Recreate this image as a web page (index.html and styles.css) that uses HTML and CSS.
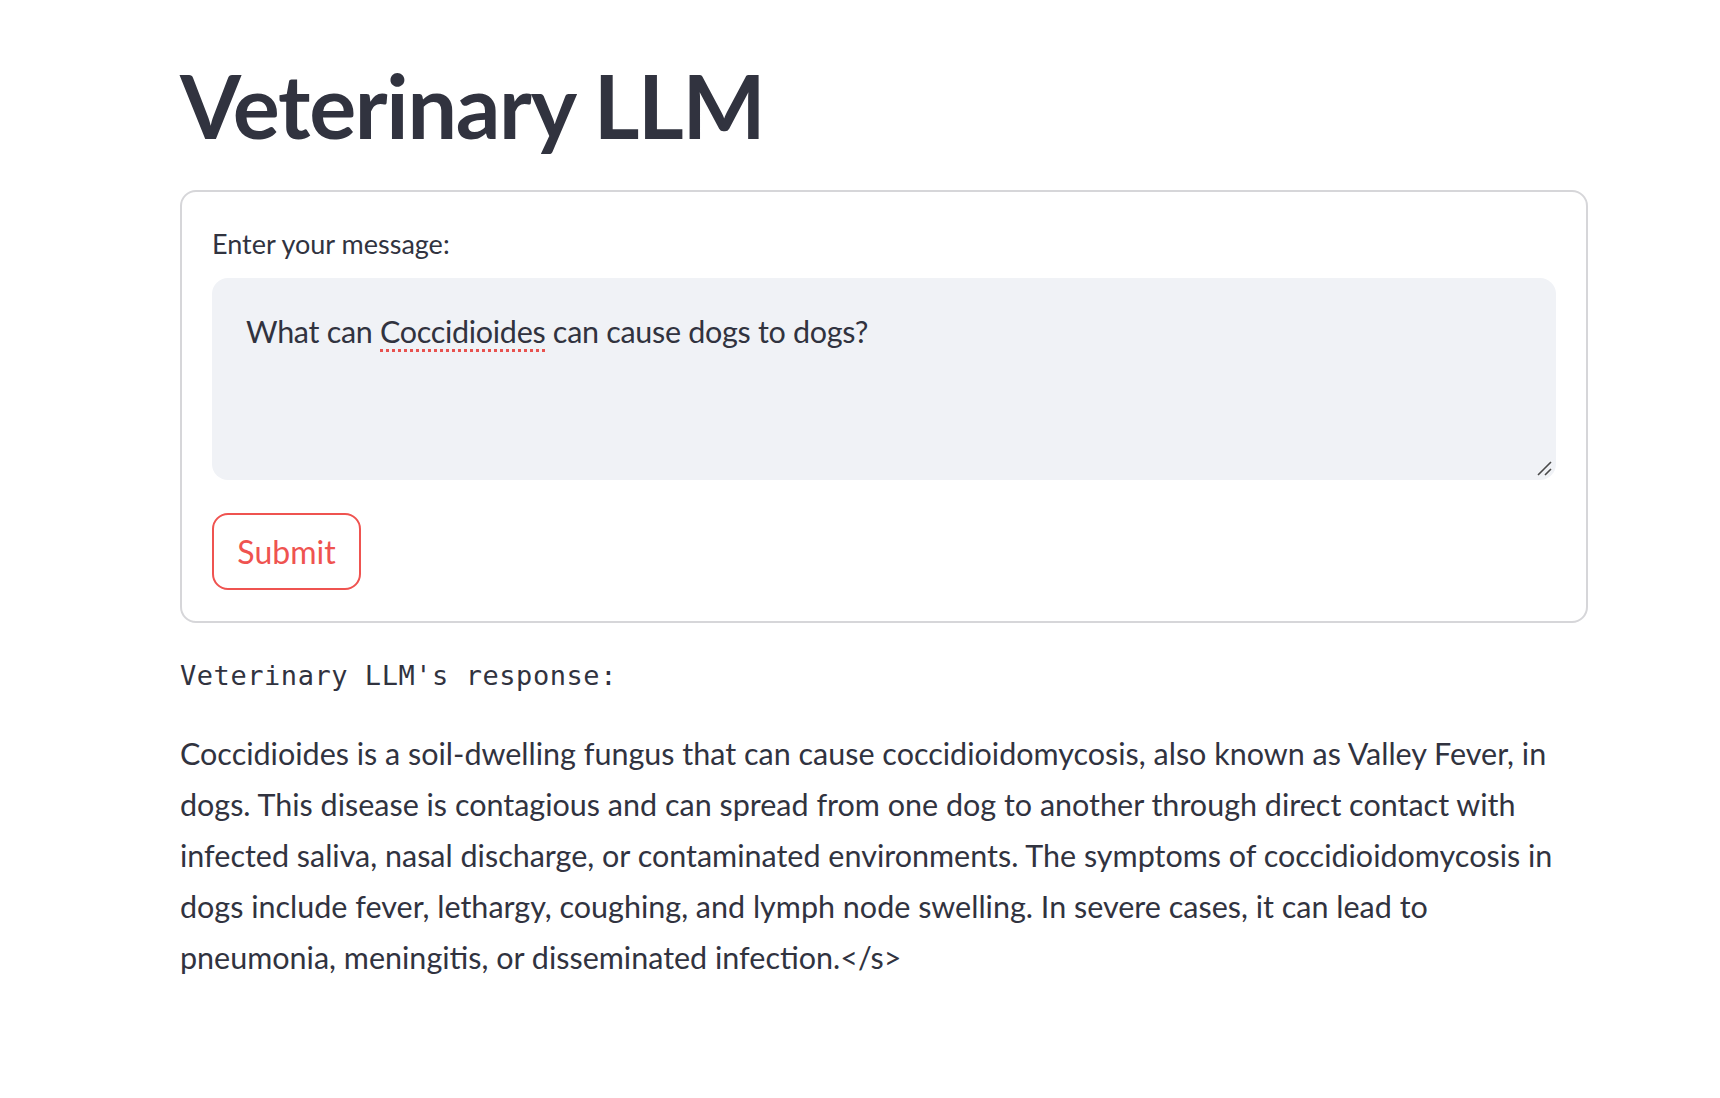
FILE: index.html
```html
<!DOCTYPE html>
<html>
<head>
<meta charset="utf-8">
<link rel="stylesheet" href="styles.css">
</head>
<body>
<main class="main">
  <h1 class="title">Veterinary LLM</h1>
  <form class="card">
    <label class="label">Enter your message:</label>
    <div class="textarea">
      <div class="textarea-text">What can <span class="misspelled">Coccidioides</span> can cause dogs to dogs?</div>
      <svg class="resize" width="16" height="16" viewBox="0 0 16 16"><path d="M2 15 L15 2 M9 15 L15 9" stroke="#4a4a4a" stroke-width="1.6" fill="none"/></svg>
    </div>
    <button type="button" class="submit">Submit</button>
  </form>
  <div class="response-label">Veterinary LLM's response:</div>
  <p class="response">Coccidioides is a soil-dwelling fungus that can cause coccidioidomycosis, also known as Valley Fever, in dogs. This disease is contagious and can spread from one dog to another through direct contact with infected saliva, nasal discharge, or contaminated environments. The symptoms of coccidioidomycosis in dogs include fever, lethargy, coughing, and lymph node swelling. In severe cases, it can lead to pneumonia, meningitis, or disseminated infection.&lt;/s&gt;</p>
</main>
</body>
</html>
```
FILE: styles.css
```css
* { box-sizing: border-box; }
html, body { margin: 0; padding: 0; background: #ffffff; }
body {
  font-family: Lato, "Noto Sans", sans-serif;
  color: #31333f;
}
.main {
  width: 1408px;
  margin-left: 180px;
  padding-top: 53px;
}
.title {
  font-size: 88px;
  font-weight: 700;
  line-height: 1.2;
  margin: 0 0 31px 0;
  letter-spacing: -1.3px;
}
.card {
  border: 2px solid rgba(49, 51, 63, 0.2);
  border-radius: 16px;
  padding: 30px 30px 31px 30px;
  display: flex;
  flex-direction: column;
  align-items: flex-start;
}
.label {
  font-size: 27px;
  line-height: 44px;
  margin-bottom: 12px;
}
.textarea {
  position: relative;
  width: 100%;
  height: 202px;
  background: #f0f2f6;
  border-radius: 16px;
  padding: 28px 34px 0 34px;
  font-size: 30.5px;
  line-height: 51px;
  letter-spacing: -0.3px;
}
.misspelled {
  text-decoration: underline dotted #e8524f;
  text-decoration-thickness: 3px;
  text-underline-offset: 6px;
}
.resize {
  position: absolute;
  right: 4px;
  bottom: 4px;
}
.submit {
  margin-top: 33px;
  width: 149px;
  height: 77px;
  border: 2px solid #ef5350;
  border-radius: 16px;
  background: #ffffff;
  color: #ef5350;
  font-family: inherit;
  font-size: 32px;
  padding: 0;
}
.response-label {
  font-family: "DejaVu Sans Mono", "Liberation Mono", monospace;
  font-size: 27px;
  letter-spacing: 0.55px;
  line-height: 44px;
  margin-top: 31px;
}
.response {
  font-size: 30.5px;
  line-height: 51px;
  margin: 30px 0 0 0;
}
```
